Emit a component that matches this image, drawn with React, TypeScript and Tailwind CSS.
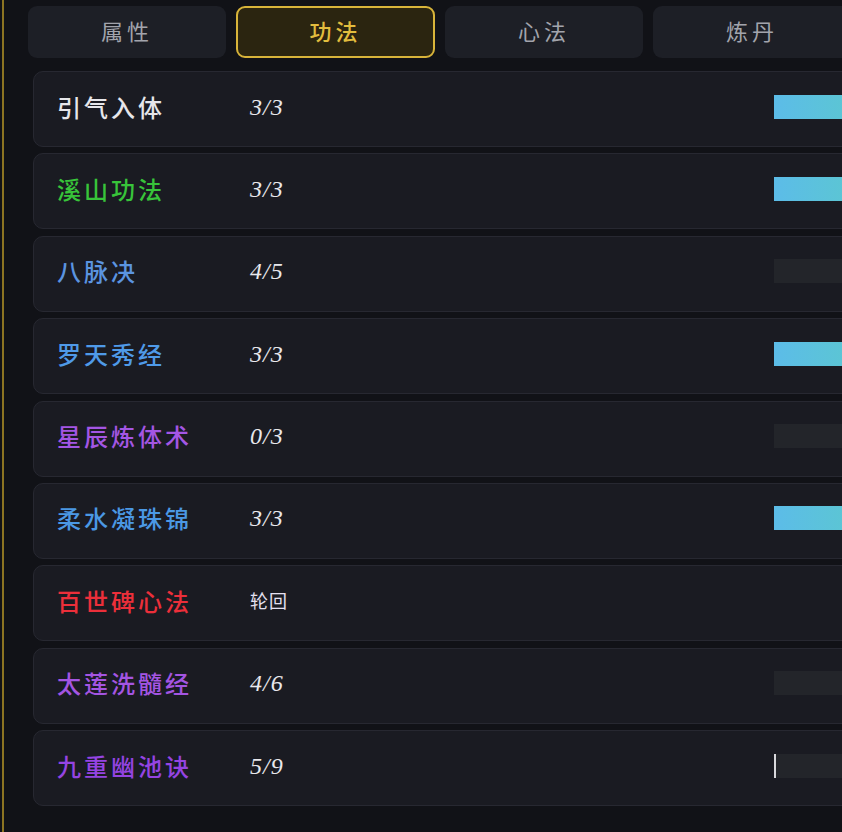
const tabs = [
  { label: "属性", active: false },
  { label: "功法", active: true },
  { label: "心法", active: false },
  { label: "炼丹", active: false },
];

const skills = [
  { name: "引气入体", color: "text-[#e6e6ea]", count: "3/3", fill: 1 },
  { name: "溪山功法", color: "text-[#38c43a]", count: "3/3", fill: 1 },
  { name: "八脉决", color: "text-[#5b94e0]", count: "4/5", fill: 0 },
  { name: "罗天秀经", color: "text-[#4f9ae8]", count: "3/3", fill: 1 },
  { name: "星辰炼体术", color: "text-[#a456e4]", count: "0/3", fill: 0 },
  { name: "柔水凝珠锦", color: "text-[#4b98e4]", count: "3/3", fill: 1 },
  { name: "百世碑心法", color: "text-[#ec2f3a]", count: "轮回", fill: -1 },
  { name: "太莲洗髓经", color: "text-[#a455e2]", count: "4/6", fill: 0 },
  { name: "九重幽池诀", color: "text-[#9544e2]", count: "5/9", fill: 0.02 },
];

const cjk = "font-['Noto_Sans_CJK_SC','Noto_Sans_CJK_JP',sans-serif]";

export default function App() {
  return (
    <div className="w-[842px] h-[832px] overflow-hidden bg-[#111217] pl-[2px]">
      <div className="h-full border-l-2 border-[#8c7422] pl-[24px] pt-[6px]">
        {/* tabs */}
        <div className="flex gap-[10px] w-[900px]">
          {tabs.map((t) => (
            <div
              key={t.label}
              className={
                t.active
                  ? `w-[199px] h-[52px] rounded-[9px] border-2 border-[#d8b43a] bg-[#2b2510] flex items-center justify-center pb-[3px] text-[22px] tracking-[4px] text-[#e2bd3e] font-medium ${cjk}`
                  : `w-[198px] h-[52px] rounded-[9px] bg-[#1d1f26] flex items-center justify-center pb-[3px] text-[22px] tracking-[4px] text-[#a2a4ac] ${cjk}`
              }
            >
              {t.label}
            </div>
          ))}
        </div>

        {/* skill rows */}
        <div className="mt-[13px] ml-[5px] flex flex-col gap-[6.4px] w-[900px]">
          {skills.map((s) => (
            <div
              key={s.name}
              className="h-[76px] rounded-[10px] border border-[#272831] bg-[#1a1b22] flex items-center pl-[23px] pb-[5px]"
            >
              <div className={`w-[193px] text-[24px] tracking-[3px] font-medium ${s.color} ${cjk}`}>
                {s.name}
              </div>
              <div
                className={
                  s.count === "轮回"
                    ? `w-[524px] text-[18px] tracking-[1px] text-[#e4e0f0] ${cjk}`
                    : "w-[524px] text-[24px] italic tracking-[1px] text-[#e8e8ec] font-['Liberation_Serif',serif]"
                }
              >
                {s.count}
              </div>
              {s.fill >= 0 && (
                <div className="w-[120px] h-[24px] bg-[#23252a] relative">
                  {s.fill > 0 && (
                    <div
                      className={
                        s.fill >= 1
                          ? "h-full bg-gradient-to-r from-[#5cbce8] to-[#5ccbc6]"
                          : "h-full bg-[#d8d8dc]"
                      }
                      style={{ width: s.fill >= 1 ? "100%" : "2px" }}
                    />
                  )}
                </div>
              )}
            </div>
          ))}
        </div>
      </div>
    </div>
  );
}
